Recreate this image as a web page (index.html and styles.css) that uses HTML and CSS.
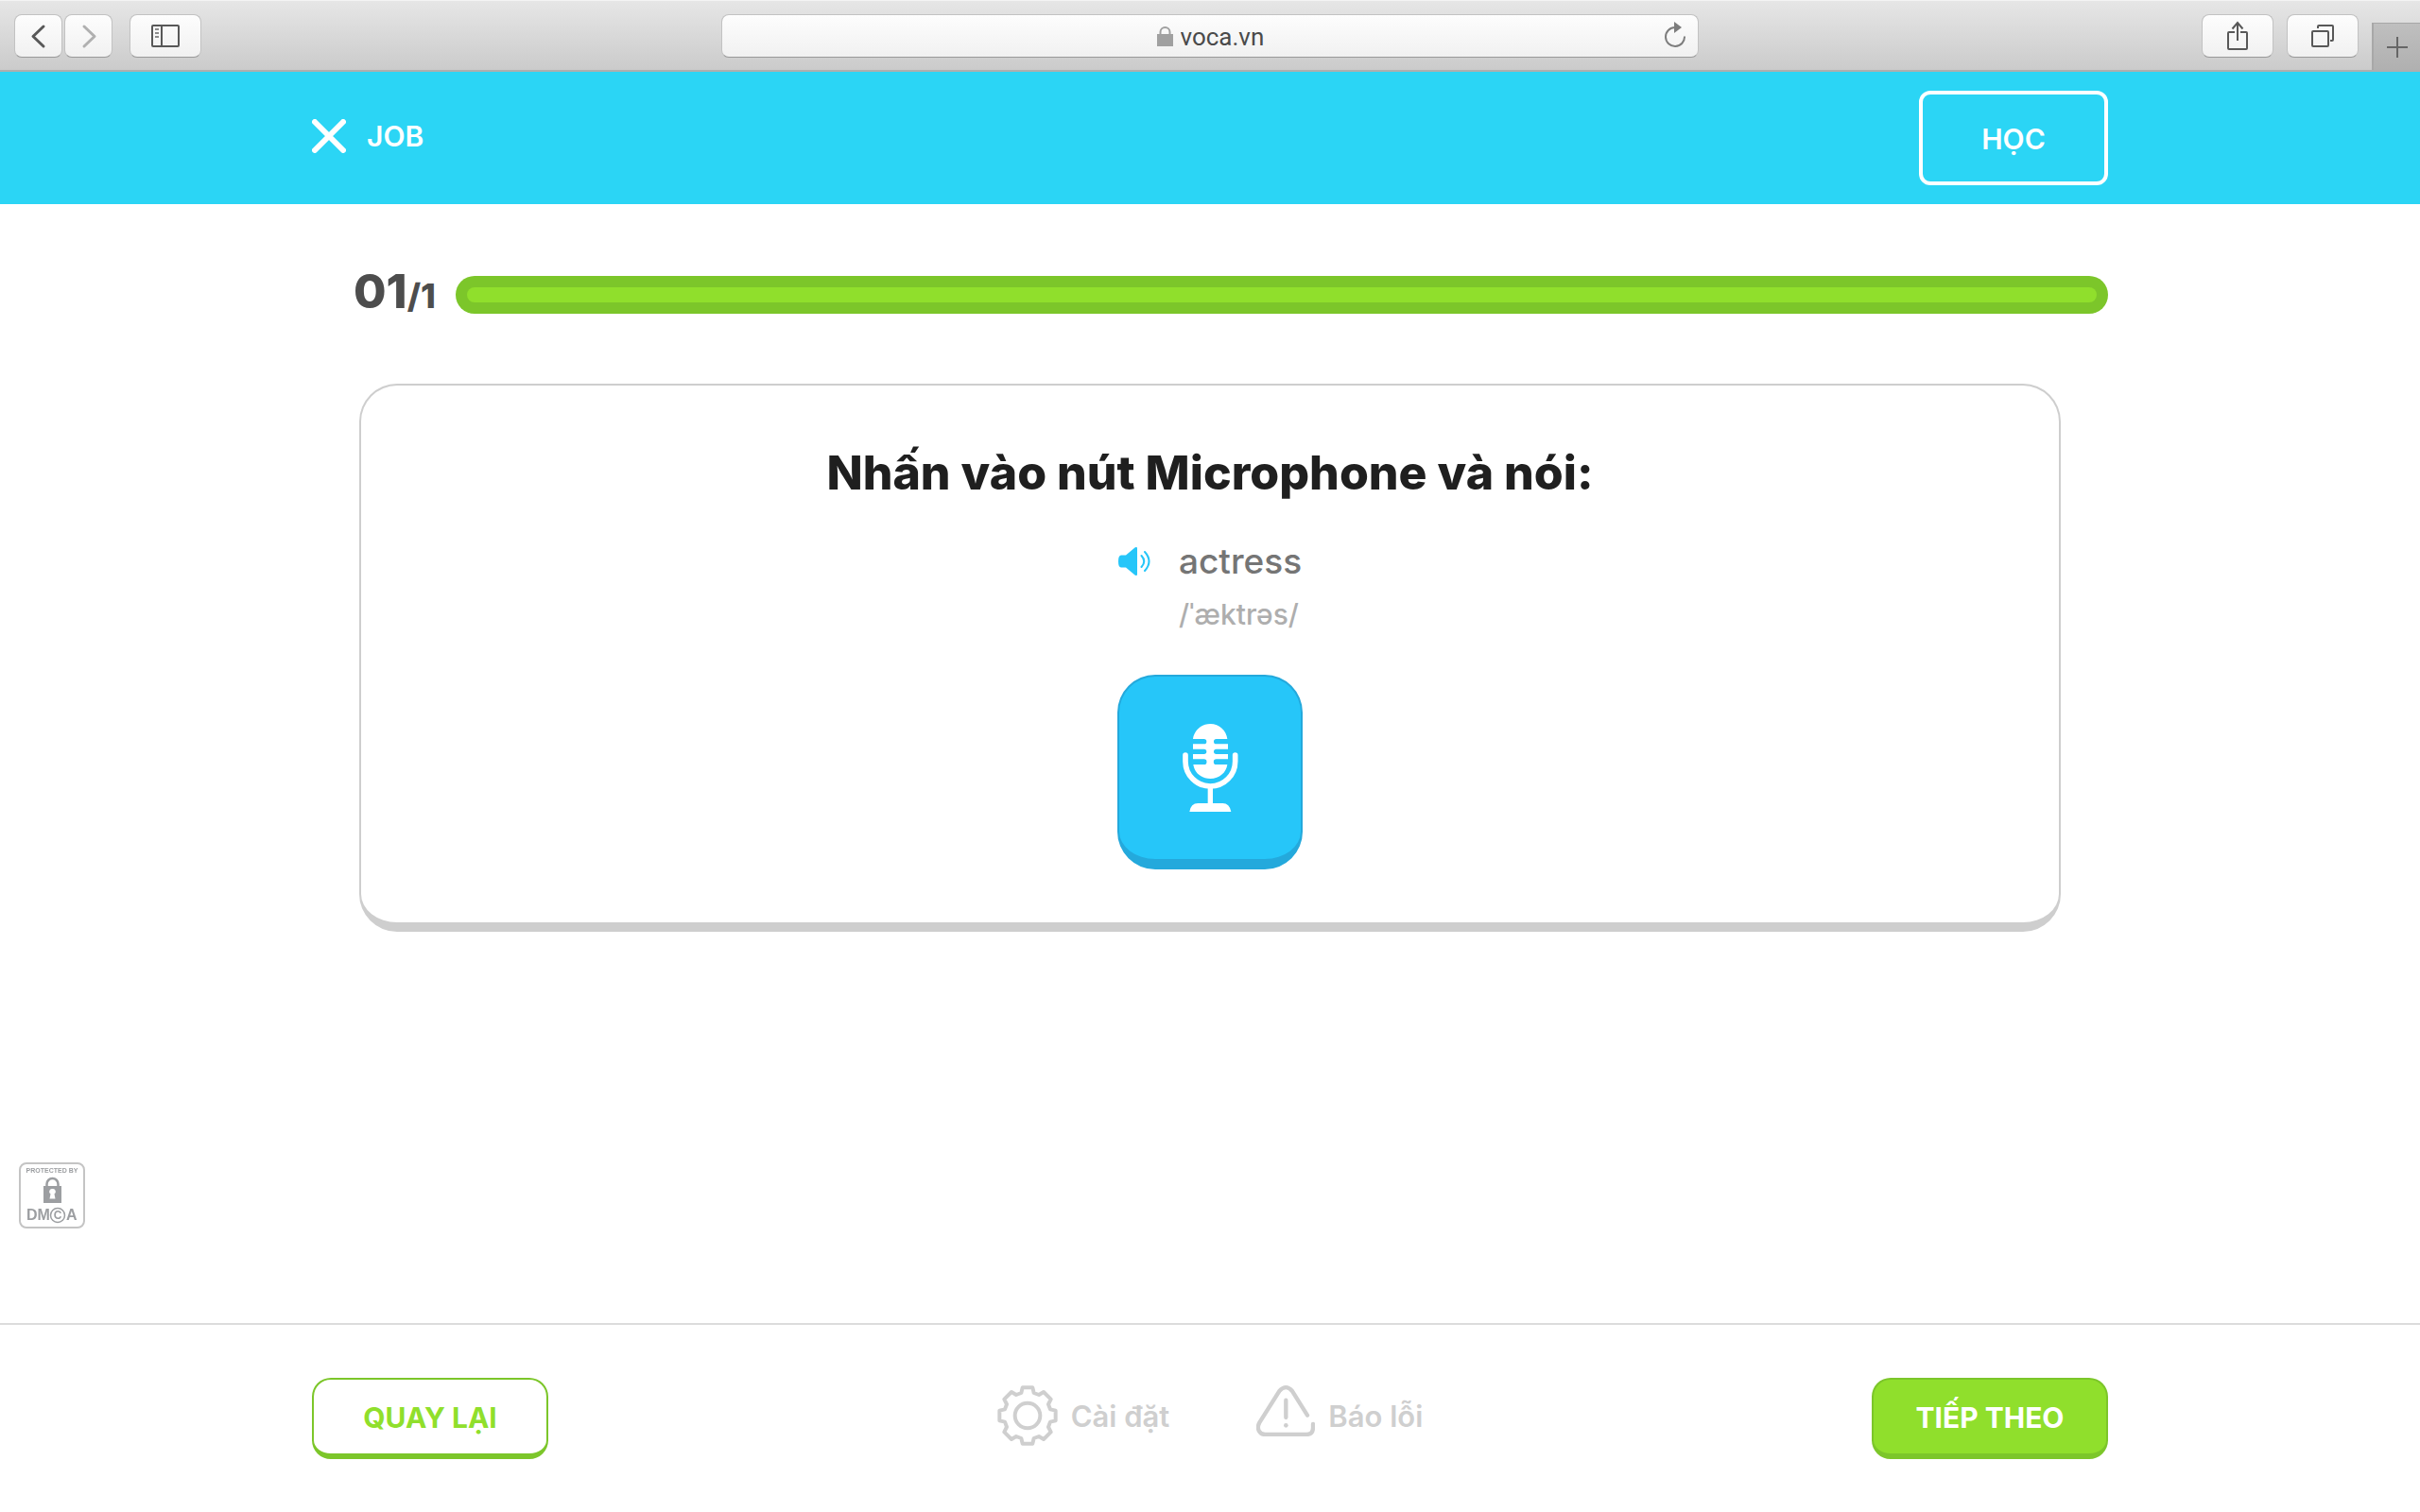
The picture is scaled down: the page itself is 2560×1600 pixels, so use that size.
FILE: index.html
```html
<!DOCTYPE html>
<html lang="vi">
<head>
<meta charset="utf-8">
<meta name="viewport" content="width=device-width, initial-scale=1">
<title>VOCA - Job</title>
<link rel="stylesheet" href="styles.css">
</head>
<body>
<div class="toolbar">
  <div class="toolbar-left">
    <button class="tool tool-nav" aria-label="Back"><svg width="50" height="44" viewBox="0 0 50 44" fill="none" stroke="#585858" stroke-width="3" stroke-linecap="round" stroke-linejoin="round"><path d="M30 12 19 22.500 30 33"/></svg></button>
    <button class="tool tool-nav" aria-label="Forward"><svg width="50" height="44" viewBox="0 0 50 44" fill="none" stroke="#b0b0b0" stroke-width="3" stroke-linecap="round" stroke-linejoin="round"><path d="M20 12 31 22.500 20 33"/></svg></button>
    <button class="tool tool-wide tool-sidebar" aria-label="Sidebar"><svg width="30" height="24" viewBox="0 0 30 24" fill="none" stroke="#585858" stroke-width="2"><rect x="1" y="1" width="28" height="22" rx="1"/><path d="M11 1v22"/><path stroke="#8c8c8c" d="M4 5h4M4 9h4M4 13h4"/></svg></button>
  </div>
  <div class="address">
    <svg width="17" height="21" viewBox="0 0 17 21"><path d="M0 8h17v13H0z" fill="#a0a0a0"/><path d="M3.500 9V6a5 5 0 0 1 10 0v3" fill="none" stroke="#a0a0a0" stroke-width="2"/></svg>
    <input class="address-input" type="text" value="voca.vn" aria-label="Address">
    <button class="reload" aria-label="Reload"><svg width="24" height="28" viewBox="0 0 24 28"><path d="M12 6A10 10 0 1 0 22 15.500" fill="none" stroke="#7d7d7d" stroke-width="2"/><path d="M11 0v12l8-6z" fill="#7d7d7d"/></svg></button>
  </div>
  <div class="toolbar-right">
    <button class="tool tool-wide" aria-label="Share"><svg width="24" height="32" viewBox="0 0 24 32" fill="none" stroke="#585858" stroke-width="2"><path d="M9 12H3a1 1 0 0 0-1 1v16a1 1 0 0 0 1 1h18a1 1 0 0 0 1-1V13a1 1 0 0 0-1-1h-6M12 21V2M6.500 8.500 12 2l5.500 6.500"/></svg></button>
    <button class="tool tool-wide" aria-label="Show tabs"><svg width="24" height="24" viewBox="0 0 24 24" fill="none" stroke="#585858" stroke-width="2"><rect x="1" y="7" width="17" height="16" rx="1"/><path d="M7 4V2q0-1 1-1h14q1 0 1 1v14q0 1-1 1h-2"/></svg></button>
    <button class="new-tab" aria-label="New tab"><svg width="22" height="22" viewBox="0 0 22 22" stroke="#666" stroke-width="2"><path d="M0 11h22M11 0v22"/></svg></button>
  </div>
</div>

<header class="header">
  <div class="container header-row">
    <a class="lesson" href="#"><svg width="36" height="36" viewBox="0 0 36 36" stroke="#fff" stroke-width="6" stroke-linecap="round"><path d="M3 3l30 30M33 3 3 33"/></svg>JOB</a>
    <button class="learn">HỌC</button>
  </div>
</header>

<main class="container main">
  <div class="progress-row">
    <p class="counter">01<span class="counter-total">/1</span></p>
    <div class="progress" role="progressbar" aria-label="01/1" aria-valuenow="1" aria-valuemin="0" aria-valuemax="1"><div class="progress-fill"></div></div>
  </div>
  <section class="card">
    <h1 class="prompt">Nhấn vào nút Microphone và nói:</h1>
    <div class="word">
      <button class="speaker" aria-label="actress"><svg width="34" height="30" viewBox="0 0 34 30"><path d="M3 8.500h5L17.500.500q2.500-1.500 2.500 1v27q0 2.500-2.500 1L8 21.500H3Q0 21.500 0 15T3 8.500z" fill="#26c6f9"/><path d="M24.500 9q5.500 6 0 12M28 5q9 10 0 20" fill="none" stroke="#26c6f9" stroke-width="2" stroke-linecap="round"/></svg></button>
      <p class="word-text">actress</p>
      <p class="ipa">/ˈæktrəs/</p>
    </div>
    <button class="mic" aria-label="Microphone"><svg width="59" height="93" viewBox="273 225 177 279"><path fill="#fff" d="M306 273C309 246 332 225 361 225S412 246 415 273H380a8 8 0 0 0 0 16h37v16h-37a8 8 0 0 0 0 16h37v16h-37a8 8 0 0 0 0 17h35C412 379 390 399 361 399S310 379 307 354h34a8 8 0 0 0 0-17h-35v-16h35a8 8 0 0 0 0-16h-35v-16h35a8 8 0 0 0 0-16z"/><path fill="none" stroke="#fff" stroke-width="17" stroke-linecap="round" d="M282 324v20a79 79 0 0 0 158 0v-20"/><path fill="#fff" d="M353 425h16v52h31q22 0 27 27H295q4-27 27-27h31z"/></svg></button>
  </section>
</main>

<a class="dmca" href="#" aria-label="Protected by DMCA">
  <svg width="70" height="70" viewBox="0 0 70 70" fill="#9c9ea1" font-family="'Liberation Sans', Arial, sans-serif" font-weight="bold">
    <rect x="1" y="1" width="68" height="68" rx="7" fill="#fff" stroke="#c4c4c4" stroke-width="2"/>
    <text x="35" y="11" font-size="7" text-anchor="middle">PROTECTED BY</text>
    <path d="M26 25h19v18H26z"/>
    <path d="M29.500 25v-2a6 6 0 0 1 12 0v2" fill="none" stroke="#9c9ea1" stroke-width="2.500"/>
    <path d="M35.500 28a3 3 0 0 1 2 5.500l1 5h-6l1-5a3 3 0 0 1 2-5.500z" fill="#fff"/>
    <text x="8" y="61" font-size="16">DM</text>
    <circle cx="41" cy="56" r="7.500" fill="#fff" stroke="#9c9ea1" stroke-width="1.500"/>
    <text x="41" y="60" font-size="12" text-anchor="middle">C</text>
    <text x="50" y="61" font-size="16">A</text>
  </svg>
</a>

<footer class="footer">
  <div class="container footer-row">
    <button class="btn btn-back">QUAY LẠI</button>
    <div class="options">
      <a class="option" href="#"><svg width="64" height="64" viewBox="-96 -96 192 192" fill="none" stroke="#cfcfcf" stroke-width="12" stroke-linejoin="round"><path d="M-16-89H16L20-72 36-66 51-75 74-52 66-36 72-20 89-16V16L72 20 66 36 74 52 51 75 36 66 20 72 16 89H-16L-20 72-36 66-51 75-74 52-66 36-72 20-89 16V-16L-72-20-66-36-74-52-51-75-36-66-20-72Z"/><circle r="40"/></svg>Cài đặt</a>
      <a class="option" href="#"><svg class="option-warning" width="62" height="54" viewBox="894 78 186 162" fill="none" stroke="#cfcfcf" stroke-width="13" stroke-linecap="round"><path d="M1056 173 1008 96Q988 73 967 96L904 196C893 216 905 234 922 234H1052Q1074 234 1074 212V201M988 125v55"/><circle cx="988" cy="205" r="7" fill="#cfcfcf" stroke="none"/></svg>Báo lỗi</a>
    </div>
    <button class="btn btn-next">TIẾP THEO</button>
  </div>
</footer>
</body>
</html>
```

FILE: styles.css
```css
* { box-sizing: border-box; }
body {
  margin: 0;
  min-height: 100vh;
  display: flex;
  flex-direction: column;
  background: #fff;
  font-family: Inter, "Noto Sans", sans-serif;
}
p, h1 { margin: 0; }
a { text-decoration: none; }
button { font: inherit; padding: 0; cursor: pointer; }
svg { display: block; flex: none; }

.container { width: min(1900px, 100% - 64px); margin: 0 auto; }

/* Browser toolbar */
.toolbar {
  display: grid;
  grid-template-columns: 1fr minmax(0, 1034px) 1fr;
  height: 76px;
  background: linear-gradient(#e6e6e6, #cbcbcb);
  border-top: 1px solid #f4f4f4;
  border-bottom: 2px solid #aeaeae;
}
.toolbar-left, .toolbar-right { display: flex; padding-top: 14px; }
.toolbar-left { gap: 2px; padding-left: 15px; margin-right: 16px; }
.toolbar-right { justify-content: flex-end; gap: 14px; }
.tool, .address {
  height: 46px;
  border: 1px solid #c2c2c2;
  border-bottom: 1px solid #999;
  border-radius: 8px;
  background: linear-gradient(#fdfdfd, #f1f1f1);
}
.tool { display: flex; align-items: center; justify-content: center; }
.tool-nav { width: 51px; }
.tool-wide { width: 76px; }
.tool-sidebar { margin-left: 16px; }
.address {
  display: flex;
  align-items: center;
  justify-content: center;
  gap: 8px;
  margin-top: 14px;
  position: relative;
}
.address-input {
  width: 88px;
  padding: 2px 0 0;
  border: 0;
  background: none;
  color: #4a4a4a;
  font: 26px/32px Roboto, sans-serif;
}
.reload { position: absolute; right: 12px; top: 7px; border: 0; background: none; }
.new-tab {
  display: flex;
  align-items: center;
  justify-content: center;
  width: 51px;
  height: 50px;
  margin-top: 9px;
  border: 0;
  border-top: 1px solid #a8a8a8;
  border-left: 2px solid #a8a8a8;
  background: linear-gradient(#bfbfbf, #b0b0b0);
}

/* Lesson header */
.header { background: #2bd5f5; color: #fff; }
.header-row { display: flex; align-items: center; justify-content: space-between; height: 140px; }
.lesson {
  display: flex;
  align-items: center;
  gap: 22px;
  padding-bottom: 4px;
  color: inherit;
  font-size: 30px;
  font-weight: 600;
}
.learn {
  width: 200px;
  height: 100px;
  padding-top: 2px;
  border: 4px solid #fff;
  border-radius: 12px;
  background: none;
  color: inherit;
  font-size: 30px;
  font-weight: 600;
}

/* Exercise */
.main { flex: 1; }
.progress-row { display: flex; align-items: center; gap: 20px; padding: 62px 0 0 44px; }
.counter { min-width: 88px; color: #4d4d4d; font-size: 50px; line-height: 60px; font-weight: 800; white-space: nowrap; }
.counter-total { font-size: 36px; line-height: 36px; }
.progress { flex: 1; height: 40px; margin-top: 8px; padding: 12px; border-radius: 20px; background: #7cc62a; }
.progress-fill { height: 16px; border-radius: 8px; background: #90df2c; }
.card {
  display: flex;
  flex-direction: column;
  align-items: center;
  margin: 68px 50px 0;
  padding: 62px 32px 56px;
  border: 2px solid #cecece;
  border-bottom-width: 10px;
  border-radius: 40px;
}
.prompt { color: #1f1f1f; font-size: 50px; line-height: 60px; font-weight: 800; }
.word {
  display: grid;
  grid-template-columns: auto auto;
  column-gap: 30px;
  row-gap: 12px;
  align-items: center;
  justify-items: center;
  margin: 40px 0 44px;
}
.speaker { border: 0; background: none; }
.word-text { color: #757575; font-size: 37px; line-height: 48px; font-weight: 500; }
.ipa { grid-column: 2; justify-self: start; color: #aeaeae; font-size: 30px; line-height: 40px; font-weight: 500; }
.mic {
  display: flex;
  align-items: center;
  justify-content: center;
  width: 196px;
  height: 206px;
  border: 2px solid #24a9dc;
  border-bottom-width: 11px;
  border-radius: 40px;
  background: #26c6f9;
}

.dmca { position: fixed; left: 20px; bottom: 300px; }

/* Footer */
.footer { border-top: 2px solid #dcdcdc; }
.footer-row { display: flex; align-items: center; justify-content: space-between; height: 198px; }
.btn {
  width: 250px;
  height: 86px;
  padding-top: 2px;
  border: 2px solid #7cc62a;
  border-bottom-width: 6px;
  border-radius: 20px;
  font-size: 30px;
  font-weight: 700;
}
.btn-back { background: #fff; color: #90df2c; }
.btn-next { background: #90df2c; color: #fff; }
.options { display: flex; gap: 92px; padding-bottom: 6px; }
.option {
  display: flex;
  align-items: center;
  gap: 14px;
  height: 64px;
  color: #cfcfcf;
  font-size: 31px;
  font-weight: 600;
}
.option-warning { align-self: flex-start; }
```
